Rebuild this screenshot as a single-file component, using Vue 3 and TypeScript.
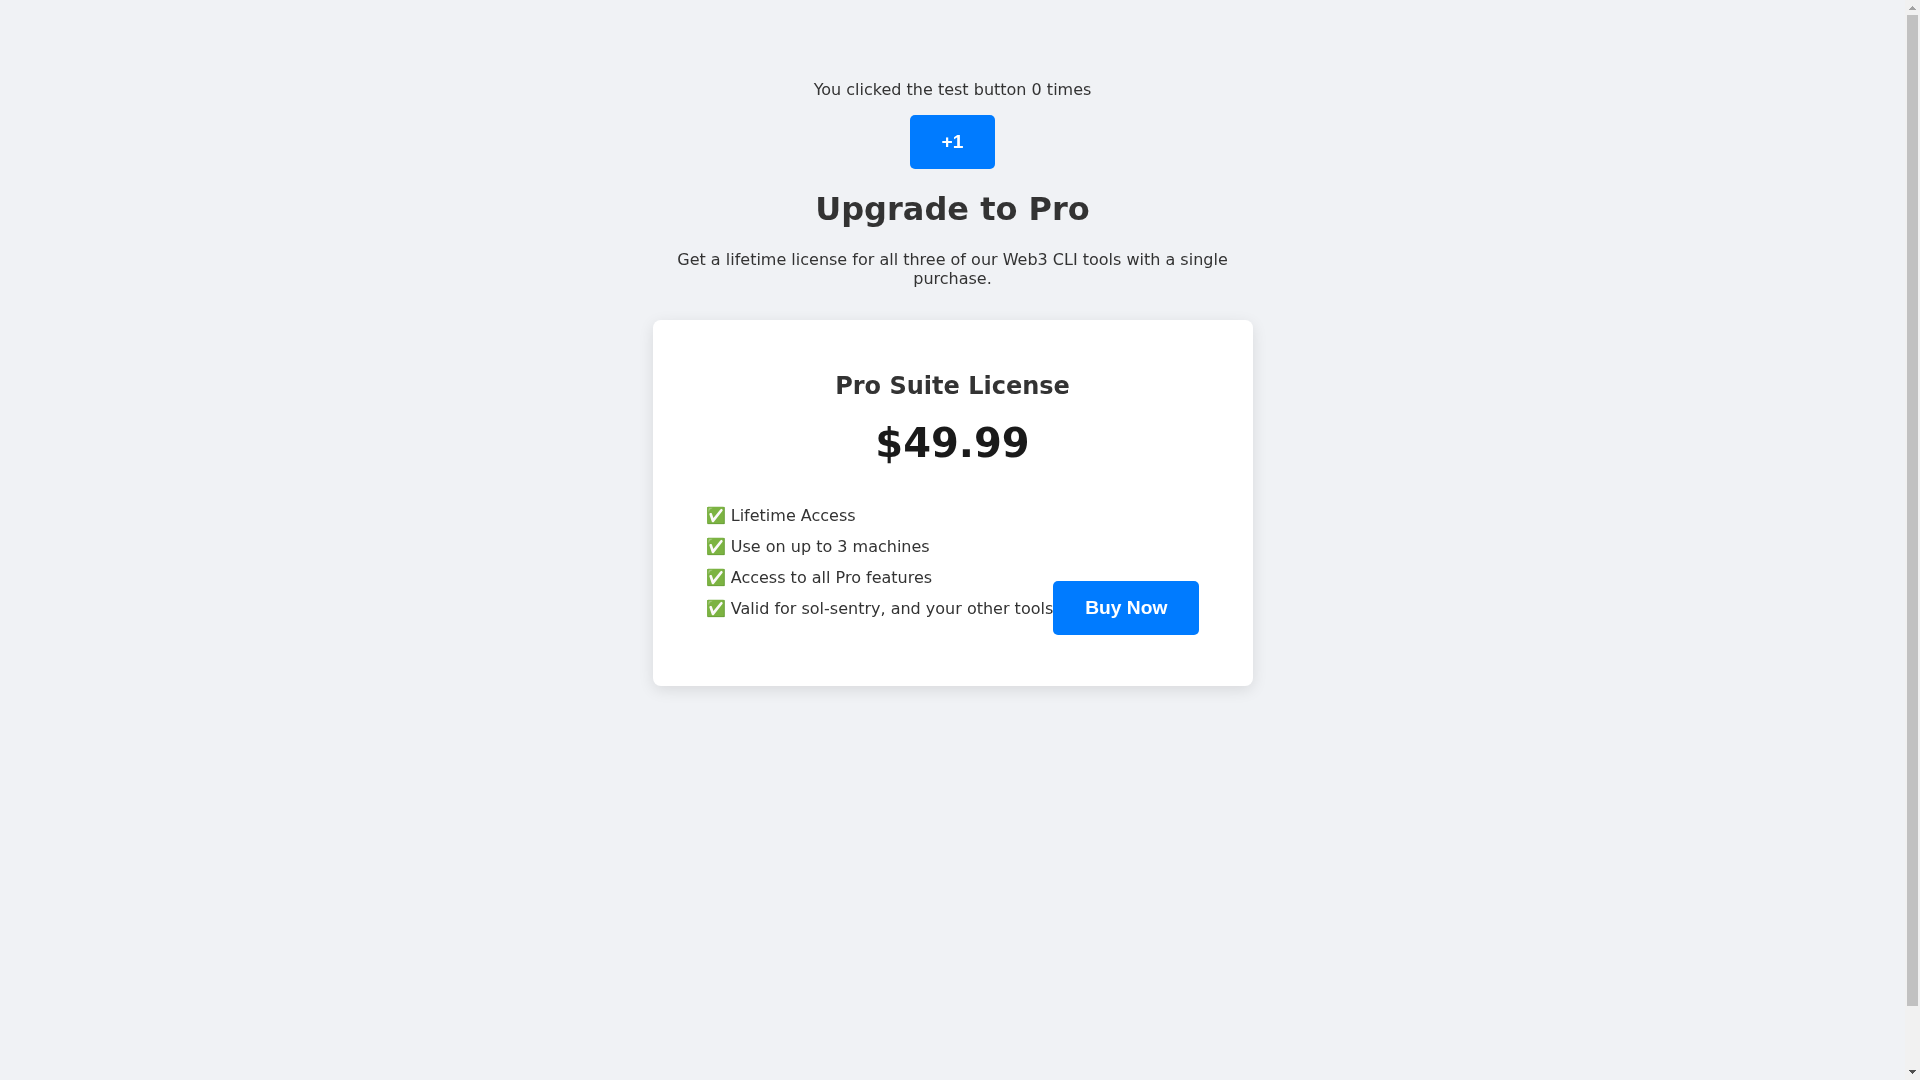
<script setup lang="ts">
import { ref } from 'vue'

const count = ref(0)
const features: string[] = [
  'Lifetime Access',
  'Use on up to 3 machines',
  'Access to all Pro features',
  'Valid for sol-sentry, and your other tools',
]
</script>

<template>
  <div class="page">
    <main class="content">
      <p class="counter">You clicked the test button {{ count }} times</p>
      <button class="btn" type="button" @click="count++">+1</button>
      <h1 class="title">Upgrade to Pro</h1>
      <p class="lead">Get a lifetime license for all three of our Web3 CLI tools with a single purchase.</p>
      <section class="card">
        <h2 class="plan">Pro Suite License</h2>
        <div class="price">$49.99</div>
        <ul class="features">
          <li v-for="f in features" :key="f">✅ {{ f }}</li>
        </ul>
        <button class="btn" type="button">Buy Now</button>
      </section>
    </main>
    <aside class="scrollbar" aria-hidden="true">
      <svg class="arrow" viewBox="0 0 15 15" width="15" height="15" shape-rendering="crispEdges">
        <polygon points="7.5,6 11.5,10 3.5,10" fill="#a3a3a3" />
      </svg>
      <div class="track"><div class="thumb"></div></div>
      <svg class="arrow" viewBox="0 0 15 15" width="15" height="15" shape-rendering="crispEdges">
        <polygon points="3.5,5 11.5,5 7.5,9" fill="#505050" />
      </svg>
    </aside>
  </div>
</template>

<style>
body {
  background: #f0f2f5;
}
</style>

<style scoped>
.page {
  display: flex;
  height: 100vh;
  overflow: hidden;
  font-family: "DejaVu Sans", sans-serif;
  font-size: 16px;
  color: #333;
  text-align: center;
}
.content {
  flex: 1;
  min-width: 0;
  padding-top: 80px;
  will-change: transform;
}
.counter {
  margin: 0 0 16px;
}
.btn {
  display: inline-block;
  padding: 16px 32px;
  border: none;
  border-radius: 5px;
  background: #007bff;
  color: #fff;
  font-family: "Liberation Sans", Arial, sans-serif;
  font-size: 19.2px;
  font-weight: 700;
  line-height: 22px;
  cursor: pointer;
}
.title {
  margin: 21.44px 0;
  font-size: 32px;
  font-weight: 700;
}
.lead {
  max-width: 560px;
  margin: 0 auto 32px;
}
.card {
  width: 600px;
  box-sizing: border-box;
  margin: 0 auto;
  padding: 40px;
  border-radius: 8px;
  background: #fff;
  box-shadow: 0 4px 15px rgba(0, 0, 0, 0.1);
}
.plan {
  margin: 12px 0 20px;
  font-size: 24px;
  font-weight: 700;
}
.price {
  margin-bottom: 40px;
  font-size: 40px;
  font-weight: 700;
  color: #1a1a1a;
}
.features {
  display: inline-block;
  margin: 0 0 16px;
  padding: 0;
  list-style: none;
  text-align: left;
}
.features li {
  margin-bottom: 12px;
}
.scrollbar {
  display: flex;
  flex-direction: column;
  flex: 0 0 15px;
  background: #f1f1f1;
}
.arrow {
  display: block;
  flex: none;
}
.track {
  flex: 1;
  padding: 0 2px;
}
.thumb {
  height: 991px;
  background: #c1c1c1;
}
</style>
